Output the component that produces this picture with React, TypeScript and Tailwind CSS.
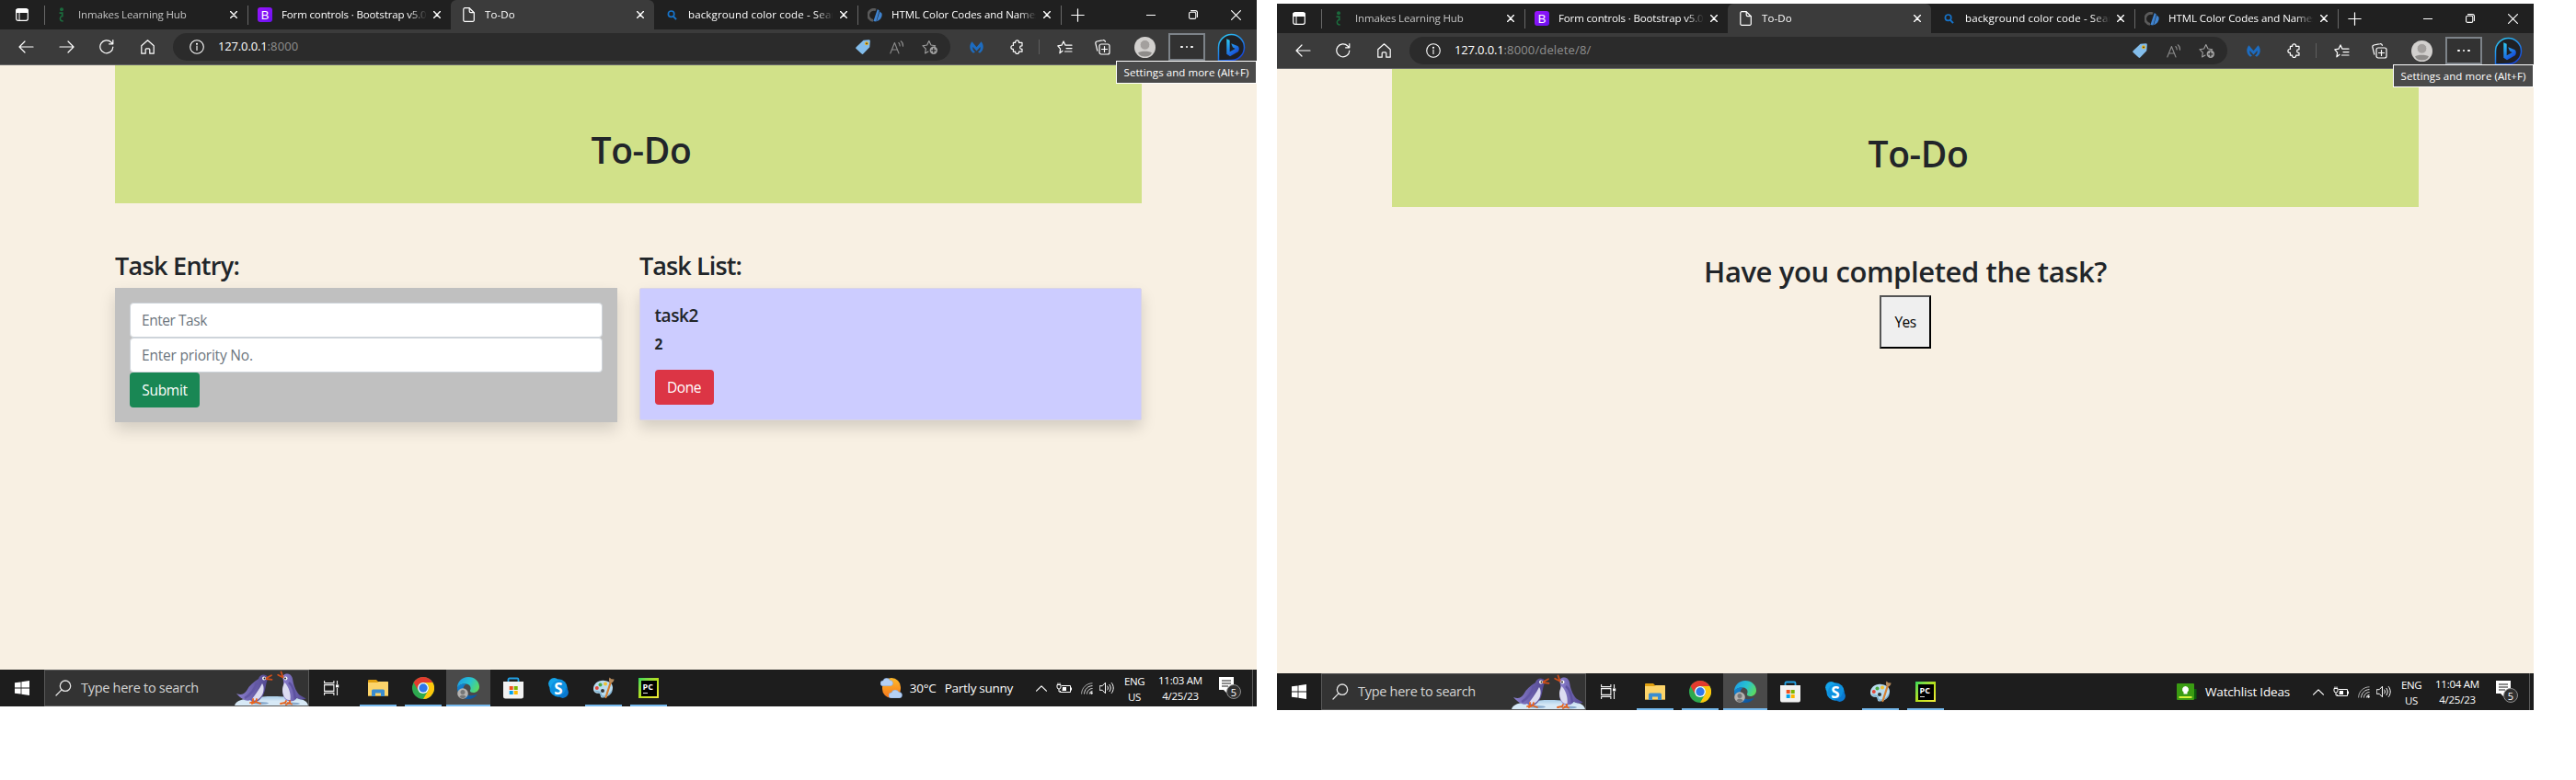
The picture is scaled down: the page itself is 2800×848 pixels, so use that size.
import type { ReactNode } from "react";

const stroke = (w = 1.2) => ({ fill: "none", stroke: "currentColor", strokeWidth: w, strokeLinecap: "round" as const, strokeLinejoin: "round" as const });

/* ---------- Browser chrome icons ---------- */

const Close = () => (
  <svg className="h-2 w-2 shrink-0" viewBox="0 0 8 8" {...stroke(1.4)}><path d="M.6.6l6.8 6.8M7.4.6L.6 7.4" /></svg>
);

const WorkspaceIcon = () => (
  <svg className="h-[14px] w-[14px]" viewBox="0 0 14 14" {...stroke(1.2)}>
    <rect x=".7" y=".7" width="12.6" height="12.6" rx="2" />
    <path d="M1 1.5h12v2.8H1z" fill="currentColor" />
    <path d="M4 4.5v8.5" strokeWidth="1" />
  </svg>
);

const InmakesIcon = () => (
  <svg className="h-4 w-2" viewBox="0 0 8 16" fill="none" stroke="#1b6b3d" strokeWidth="1.8">
    <circle cx="4" cy="2.2" r="2" fill="#1b6b3d" stroke="none" />
    <path d="M1.5 6.2h3.2v3" />
    <path d="M5.6 9.6c-2.6 0-3.4 1.2-3.2 3 .1 1.5 1 2.3 3.3 2.3" strokeWidth="1.5" />
  </svg>
);

const BootstrapIcon = () => (
  <span className="flex h-4 w-4 items-center justify-center rounded-[3px] bg-gradient-to-br from-[#9a12fb] to-[#6a10f0] font-['Liberation_Sans',sans-serif] text-[13px] leading-none text-white">B</span>
);

const FileIcon = () => (
  <svg className="h-4 w-[13px]" viewBox="0 0 13 16" {...stroke(1.2)}>
    <path d="M2.2.7h5L12.3 5.7v8.2a1.4 1.4 0 0 1-1.4 1.4H2.2A1.4 1.4 0 0 1 .8 13.9V2.1A1.4 1.4 0 0 1 2.2.7z" />
    <path d="M7.2 1v3.3a1.4 1.4 0 0 0 1.4 1.4H12" />
  </svg>
);

const BlueSearch = () => (
  <svg className="h-[11px] w-[11px]" viewBox="0 0 11 11" fill="none" stroke="#1673c9" strokeWidth="1.7"><circle cx="4.6" cy="4.2" r="3.2" /><path d="M7 6.8l3 3.4" strokeWidth="2" /></svg>
);

const HtmlColorIcon = () => (
  <svg className="h-[15px] w-[16px]" viewBox="0 0 16 15">
    <path d="M9 1.8A6 6 0 1 0 6 13.3" fill="none" stroke="#5a5a5a" strokeWidth="2.8" />
    <path d="M10.8 1L6.4 14l3 .4L12.8 2.500zM13.200 3.500l-3.200 10.500c4-1 6.300-5 5.500-8.500z" fill="#3f83cf" />
  </svg>
);

const NavBack = () => (
  <svg className="h-[14px] w-[17px]" viewBox="0 0 17 14" {...stroke(1.2)}><path d="M16 7H1M7 1L1 7l6 6" /></svg>
);
const NavForward = () => (
  <svg className="h-[14px] w-[17px]" viewBox="0 0 17 14" {...stroke(1.2)}><path d="M1 7h15M10 1l6 6-6 6" /></svg>
);
const Reload = () => (
  <svg className="h-4 w-4" viewBox="0 0 16 16" {...stroke(1.2)}><path d="M14.8 8.2A7 7 0 1 1 12.9 3L14.5 4.5M14.800.6v4.200h-4.200" /></svg>
);
const HomeIcon = () => (
  <svg className="h-4 w-[15px]" viewBox="0 0 15 16" {...stroke(1.2)}><path d="M.8 6.7L7.5.8l6.7 5.9v8.500H9.800v-4.400a1 1 0 0 0-1-1H6.200a1 1 0 0 0-1 1v4.400H.8z" /></svg>
);
const InfoIcon = () => (
  <svg className="h-4 w-4" viewBox="0 0 16 16" {...stroke(1.1)}><circle cx="8" cy="8" r="7.3" /><path d="M8 7v4.5" /><circle cx="8" cy="4.7" r=".5" fill="currentColor" /></svg>
);
const TagIcon = () => (
  <svg className="h-4 w-4" viewBox="0 0 16 16">
    <path d="M8.500.8l5.800-.6a1.400 1.400 0 0 1 1.500 1.500l-.5 6.600-7 7.200a1.200 1.200 0 0 1-1.700 0L.6 10a1.200 1.200 0 0 1 0-1.700z" fill="#83bdeb" />
    <circle cx="12" cy="4.3" r="2" fill="#f2b413" /><circle cx="12" cy="4.3" r=".9" fill="#333" />
  </svg>
);
const ReadAloud = () => (
  <svg className="h-[15px] w-4 text-[#8c8c8c]" viewBox="0 0 16 15" {...stroke(1.1)}><path d="M.8 14L5.4 2.5 10 14M2.3 10h6.2M9.8 2.5c1 .9 1.4 2 1.3 3.4M12.200.8c1.700 1.300 2.500 3.300 2.300 5.500" /></svg>
);
const StarAdd = () => (
  <svg className="h-[17px] w-[18px] text-[#a0a0a0]" viewBox="0 0 18 17" {...stroke(1.1)}>
    <path d="M7 13L3.6 15l.7-4.8L.9 6.7l4.7-.7L7.8 1.5 10 6l4.7.7-1 1" />
    <circle cx="12.8" cy="11.8" r="4.2" fill="#a0a0a0" stroke="none" />
    <path d="M12.8 9.600V14M10.600 11.800H15" stroke="#2b2b2b" strokeWidth="1.2" />
  </svg>
);
const MalwareIcon = () => (
  <svg className="h-[13px] w-[15px]" viewBox="0 0 15 13" fill="#1d6cc0"><path d="M2.500.3L7.500 6.200 12.500.3C15.800 4.200 15.600 9.600 11 12.800L9 11.600C11.200 10 12 8 11.600 6L7.500 10.400 3.400 6C3 8 3.800 10 6 11.600L4 12.800C-.6 9.600-.8 4.200 2.500.3z" /></svg>
);
const PuzzleIcon = () => (
  <svg className="h-4 w-[15px]" viewBox="0 0 15 16" {...stroke(1.2)}><path d="M3.400 3.400h2.200v-.6a2 2 0 0 1 4 0v.6h3.400v3.400h-.6a1.800 1.800 0 0 0 0 3.600h.6v2.800H9.600v.4a2 2 0 0 1-4 0v-.4H3.400v-2.900h-.6a1.900 1.900 0 0 1 0-3.800h.6z" /></svg>
);
const FavoritesIcon = () => (
  <svg className="h-[15px] w-[17px]" viewBox="0 0 17 15" {...stroke(1.2)}><path d="M6 11.300L2.900 13.800l.7-4.700L.8 5.900l4.200-.7L7 .9l2 4.300h7M10 8.600h6M8.500 12h7.500" /></svg>
);
const CollectionsIcon = () => (
  <svg className="h-[17px] w-[17px]" viewBox="0 0 17 17" {...stroke(1.2)}>
    <rect x="5" y="5" width="11" height="11" rx="2" /><path d="M10.500 7.500v6M7.500 10.500h6M2.800 12.200L.9 4.400A2 2 0 0 1 2.300 2l6.700-1.300a2 2 0 0 1 2.400 1.600" />
  </svg>
);
const Avatar = () => (
  <svg className="h-[23px] w-[23px]" viewBox="0 0 23 23"><circle cx="11.5" cy="11.5" r="11.5" fill="#d2d0ce" /><path d="M4 17.500c2-2.200 13-2.200 15 0-1.500 3-4.500 4-7.500 4s-6-1-7.500-4z" fill="#8e8c8a" /><circle cx="11.5" cy="8.8" r="5.4" fill="#a3a09e" stroke="#d2d0ce" /></svg>
);
const BingIcon = () => (
  <svg className="h-[31px] w-[31px]" viewBox="0 0 31 31">
    <defs>
      <linearGradient id="bing" x1="0" y1="0" x2=".6" y2="1"><stop offset="0" stopColor="#2fd0f4" /><stop offset="1" stopColor="#1546d8" /></linearGradient>
    </defs>
    <path d="M1.500 30V15.500a14 14 0 1 1 14 14z" fill="#1f2024" stroke="url(#bing)" strokeWidth="1.5" />
    <path d="M10.300 6.300l3.400 1.500v12.400l6-3.300-2.700-1.400-1.800-4.200 7 2.600c2 1 2.200 5 .2 6.600l-8.400 4.800-3.700-2.500z" fill="url(#bing)" />
  </svg>
);

/* ---------- Taskbar icons ---------- */

const WindowsLogo = () => (
  <svg className="h-4 w-4" viewBox="0 0 16 16" fill="#fff"><path d="M0 2.300l6.600-.9v6.200H0zM7.400 1.300L16 0v7.600H7.400zM0 8.400h6.600v6.200L0 13.700zM7.400 8.400H16V16l-8.600-1.300z" /></svg>
);
const Magnifier = () => (
  <svg className="h-[18px] w-[18px] text-[#e4e4e4]" viewBox="0 0 18 18" {...stroke(1.3)}><circle cx="11" cy="6.7" r="5.7" /><path d="M7 10.900L1 17" /></svg>
);
const Penguins = () => (
  <svg className="h-[40px] w-[80px] shrink-0" viewBox="0 0 80 40">
    <defs>
      <linearGradient id="ice" x1="0" x2="0" y1="0" y2="1"><stop offset="0" stopColor="#a9cde8" /><stop offset=".5" stopColor="#d7e9f6" /></linearGradient>
      <linearGradient id="feather" x1="0" x2="1" y1="0" y2="0"><stop offset="0" stopColor="#8c80cf" /><stop offset="1" stopColor="#51478f" /></linearGradient>
    </defs>
    <path d="M0 40c0-6 8-8 20-9.500C34 28 60 28.500 72 32c5 1.500 8 4 8 8z" fill="url(#ice)" />
    <ellipse cx="28" cy="36.5" rx="9" ry="1.5" fill="#87a9cc" /><ellipse cx="62" cy="37" rx="9" ry="1.5" fill="#87a9cc" />
    <path d="M2 26c5 2 8 1 11-3 3-6 8-10 13-13 1-4 5-5.500 8-4 2 1 2.500 3 1.500 5.500C33 18 34 27 27 33c-3 3-8 3-10 0-3 2-9 0-15-7z" fill="url(#feather)" />
    <path d="M30 15c3 4 2 13-4 17-3 2-6 2-7 0 3-4 8-11 11-17z" fill="#dcdcf0" />
    <path d="M11 31c6-3 12-11 13-17" fill="none" stroke="#6257a5" strokeWidth="2.5" />
    <path d="M34 9.500l6-3.300M34 10l6.500.8" stroke="#cf4f1b" strokeWidth="1.8" strokeLinecap="round" />
    <circle cx="32" cy="9.5" r="2" fill="#fff" /><circle cx="32.5" cy="9.5" r="1" fill="#222" />
    <path d="M20 32v3l-3 1M24 32l-1 3 5 2M23 35l-4 2" stroke="#e8641d" strokeWidth="1.8" fill="none" strokeLinecap="round" />
    <path d="M52 9c0-3 3-5 6-4.500 4 1 5 4 5.500 8 1 6 4 12 7 15l7 4c-3 2-8 1-10-1-1 3-4 4-8 4-6-1-8-8-7-14 .5-4 1.500-8-.5-11.500z" fill="url(#feather)" />
    <path d="M54.500 14c4 4 7 12 6 19-5 1-8.500-5-8.500-11 0-3 1-5 2.500-8z" fill="#dcdcf0" />
    <path d="M59 14c5 4 6 10 7 18" fill="none" stroke="#5d52a0" strokeWidth="2.5" />
    <path d="M52.500 8.500l-5.300-2.800M52.500 8l-2-5.500" stroke="#cf4f1b" strokeWidth="1.8" strokeLinecap="round" />
    <circle cx="55.5" cy="9.5" r="2" fill="#fff" /><circle cx="55" cy="9.5" r="1" fill="#222" />
    <path d="M56 34l-1 2-5 1M60 34v2l-4 2M58 36l4 1.500" stroke="#e8641d" strokeWidth="1.8" fill="none" strokeLinecap="round" />
  </svg>
);
const TaskView = () => (
  <svg className="h-4 w-[17px]" viewBox="0 0 17 16" fill="none" stroke="#f4f4f4" strokeWidth="1.1"><path d="M.6 0v2.600h10.300V0M.6 16v-2.600h10.300V16M.6 4.600h10.300v6.800H.6zM14.500 0v4M14.500 8v8" /><path d="M13 4.400h3.200v3H13z" fill="#fff" stroke="none" /></svg>
);
const Explorer = () => (
  <svg className="h-[18px] w-[22px]" viewBox="0 0 22 18"><path d="M0 1a1 1 0 0 1 1-1h8l2 2h10a1 1 0 0 1 1 1v14.500H0z" fill="#e0a010" /><path d="M0 3h10l2-1h9a1 1 0 0 1 1 1v14.500H0z" fill="#fcd46a" /><path d="M4 18v-6a1.500 1.500 0 0 1 1.500-1.500h11A1.500 1.500 0 0 1 18 12v6h-4v-3.500H8V18z" fill="#3b8dd0" /></svg>
);
const Chrome = () => (
  <svg className="h-6 w-6" viewBox="0 0 24 24"><circle cx="12" cy="12" r="12" fill="#2da94f" /><path d="M1.600 6A12 12 0 0 1 22.400 6H12a6 6 0 0 0-5.200 9z" fill="#e33b2e" /><path d="M22.400 6A12 12 0 0 1 12 24l5.200-9A6 6 0 0 0 12 6z" fill="#fdc70c" /><circle cx="12" cy="12" r="6" fill="#fff" /><circle cx="12" cy="12" r="4.7" fill="#2f77ea" /></svg>
);
const Edge = () => (
  <svg className="h-6 w-6" viewBox="0 0 24 24">
    <defs>
      <linearGradient id="edgeTop" x1="0" x2="1" y1=".3" y2=".7"><stop offset="0" stopColor="#1c9fe6" /><stop offset=".5" stopColor="#28c3cf" /><stop offset="1" stopColor="#5fdc5a" /></linearGradient>
      <linearGradient id="edgeLow" x1="0" x2="1" y1="0" y2="1"><stop offset="0" stopColor="#1489d6" /><stop offset="1" stopColor="#0d4c94" /></linearGradient>
    </defs>
    <path d="M0 12C0 5 5 0 12 0s12 5 12 10.500c0 4-3 6.500-6.500 6.500-2.500 0-4-1-3.500-2.500 1.500-3 0-6.500-4-7C5 7 1 9 0 12z" fill="url(#edgeTop)" />
    <path d="M0 12c1-3.500 5-5 10-4.500-3.500 2-4.500 6-2 9.500 3 4 9 4 14 1.500C20 22 16.500 24 12 24 5 24 0 18.500 0 12z" fill="url(#edgeLow)" />
    <circle cx="6" cy="18" r="5.8" fill="#b5b3b1" /><circle cx="6" cy="16.5" r="2.5" fill="#777" /><path d="M2.500 21.500c1-2.500 6-2.500 7 0-2 2-5 2-7 0z" fill="#777" />
  </svg>
);
const Store = () => (
  <svg className="h-6 w-6" viewBox="0 0 24 24"><path d="M6.500 6V2.800A1.300 1.300 0 0 1 7.800 1.500h8.400a1.300 1.300 0 0 1 1.300 1.300V6" fill="none" stroke="#22a2e6" strokeWidth="1.8" /><path d="M1 5h22v16a2.500 2.500 0 0 1-2.500 2.500h-17A2.500 2.500 0 0 1 1 21z" fill="#f2f2f2" /><path d="M7.700 10h4v4h-4z" fill="#f0501e" /><path d="M12.700 10h4v4h-4z" fill="#7cb700" /><path d="M7.700 15h4v4h-4z" fill="#00a2ed" /><path d="M12.700 15h4v4h-4z" fill="#fdb800" /></svg>
);
const Skype = () => (
  <span className="relative flex h-[22px] w-[22px] items-center justify-center">
    <svg className="absolute inset-0 h-full w-full" viewBox="0 0 22 22"><circle cx="11" cy="11" r="9.7" fill="#0d93e2" /><circle cx="6.3" cy="6.3" r="6.2" fill="#14a4ea" /><circle cx="15.7" cy="15.7" r="6.2" fill="#0a79d1" /><circle cx="11" cy="11" r="8" fill="#0e90df" /></svg>
    <span className="relative text-[17px] leading-none font-bold text-white">S</span>
  </span>
);
const Paint = () => (
  <svg className="h-6 w-6" viewBox="0 0 24 24"><path d="M1 13C1 7 7 3 13 4c5 .5 9 3 9 7.500 0 6-5 11-11 11-2.500 0-2-2-2.500-3.500-.6-2-2.500-1-4.500-1.500S1 15 1 13z" fill="#b9dcef" /><path d="M3 15c2 2 5 0 6 3 .5 2 .5 3.500 3 3.300 4-.3 7.500-2.500 9-6" fill="none" stroke="#7fb2d2" strokeWidth="1.5" /><circle cx="4.8" cy="12" r="2" fill="#e2473a" /><circle cx="8.5" cy="8.5" r="2" fill="#49a942" /><circle cx="14" cy="7.5" r="2" fill="#f1c232" /><circle cx="11" cy="15" r="2" fill="#333" /><path d="M14.500 22L20 5" stroke="#d68032" strokeWidth="2.2" strokeLinecap="round" /><path d="M18.500 5.500c-1-2-.5-3.500 0-5l2 1.800 3 .2c0 2-1.500 3.500-2.800 4z" fill="#b58a5c" /></svg>
);
const PyCharm = () => (
  <span className="flex h-[22px] w-[22px] bg-gradient-to-br from-[#21d757] via-[#b5e01a] to-[#f4ec3a] p-[2.5px]">
    <span className="flex flex-1 flex-col items-start bg-black pt-[2px] pl-[2px]">
      <span className="text-[9px] leading-[9px] font-bold text-white">PC</span>
      <span className="mt-[2px] h-[1.5px] w-[5px] bg-[#ddd]" />
    </span>
  </span>
);
const Cloud = ({ c }: { c: string }) => (
  <svg className={c} viewBox="0 0 15 9"><path d="M3 9a3 3 0 0 1 0-6 4.300 4.300 0 0 1 8-.5A3.300 3.300 0 0 1 12 9z" fill="#b4d0f5" stroke="#7ea4de" strokeWidth=".5" /></svg>
);
const Weather = () => (
  <span className="relative h-[22px] w-6">
    <span className="absolute top-0 left-[2px] h-[22px] w-[20px] rounded-full bg-gradient-to-b from-[#fdb92c] to-[#f4741a]" />
    <Cloud c="absolute top-0 left-0 h-[9px] w-[14px]" />
    <Cloud c="absolute bottom-0 left-[9px] h-[9px] w-[15px]" />
  </span>
);
const Watchlist = () => (
  <svg className="h-[19px] w-[22px]" viewBox="0 0 22 19"><path d="M15 6h6.500v11H15z" fill="#0c5c0c" /><rect width="19" height="18" rx="1" fill="#3a9c12" /><path d="M9.500 3a3.600 3.600 0 0 1 2 6.500v2h-4v-2a3.600 3.600 0 0 1 2-6.500z" fill="#fff" /><path d="M2.500 14h14v2h-14z" fill="#d7f23a" /></svg>
);
const Chevron = () => (
  <svg className="h-[7px] w-3" viewBox="0 0 12 7" {...stroke(1.2)}><path d="M.6 6.200L6 .8l5.400 5.400" /></svg>
);
const Battery = () => (
  <svg className="h-[13px] w-[17px]" viewBox="0 0 17 13" fill="none" stroke="#fff"><path d="M6 3.500h9.500v7H4.500V9" /><path d="M7 5h4v4H6.500z" fill="#fff" stroke="none" /><path d="M16.500 5.500v3M1 2.500h4v2.500a2 2 0 0 1-4 0zM2 2.500V.5M4 2.500V.5M3 7v3h1.500" /></svg>
);
const Wifi = () => (
  <svg className="h-[13px] w-[13px]" viewBox="0 0 13 13" fill="none" stroke="#e0e0e0"><path d="M.6 12.500C.6 6 6 .8 12.500.8" stroke="#aaa" /><path d="M3.600 12.500c0-4.900 4-8.900 8.900-8.900M6.500 12.500c0-3.300 2.700-6 6-6M9.300 12.500c0-1.800 1.400-3.200 3.200-3.200" /><circle cx="11.5" cy="11.5" r="1.2" fill="#fff" stroke="none" /></svg>
);
const Sound = () => (
  <svg className="h-[14px] w-[17px]" viewBox="0 0 17 14" {...stroke(1)}><path d="M.6 4.700h2.600L6.500 1.200v11.600L3.200 9.300H.6zM8.800 5c.8 1.200.8 2.800 0 4M11 3.300c1.700 2.200 1.700 5.200 0 7.400M13.300 1.500c2.600 3.200 2.600 7.800 0 11" /></svg>
);

/* ---------- Browser window ---------- */

type TabInfo = { title: string; cls: string; icon: ReactNode; active?: boolean; sep?: boolean };
const TABS: TabInfo[] = [
  { title: "Inmakes Learning Hub", cls: "tracking-[-0.15px] text-[#c4c4c4]", icon: <InmakesIcon />, sep: true },
  { title: "Form controls · Bootstrap v5.0", cls: "tracking-[-0.14px]", icon: <BootstrapIcon />, sep: true },
  { title: "To-Do", cls: "tracking-[0.1px]", icon: <FileIcon />, active: true },
  { title: "background color code - Search", cls: "tracking-[0.14px]", icon: <BlueSearch /> },
  { title: "HTML Color Codes and Names", cls: "tracking-[-0.06px]", icon: <HtmlColorIcon />, sep: true },
];

function Tab({ tab }: { tab: TabInfo }) {
  return (
    <div className={`flex h-8 w-[221px] shrink-0 items-center ${tab.active ? "rounded-t-md bg-[#3b3b3b]" : ""}`}>
      <span className={`h-[21px] w-px ${tab.sep ? "bg-[#686868]" : ""}`} />
      <span className="flex w-[36px] items-center justify-center">{tab.icon}</span>
      <span className={`w-[157px] overflow-hidden text-[11.5px] whitespace-nowrap [mask-image:linear-gradient(to_right,black_138px,transparent_158px)] ${tab.cls}`}>{tab.title}</span>
      <span className="flex w-[24px] justify-center"><Close /></span>
    </div>
  );
}

const Cell = ({ w = "w-11", children }: { w?: string; children: ReactNode }) => (
  <span className={`flex h-full shrink-0 items-center justify-center ${w}`}>{children}</span>
);

function BrowserHeader({ path, forward }: { path: string; forward?: boolean }) {
  return (
    <header className="text-white">
      <div className="flex h-8 items-center bg-[#202020]">
        <Cell w="w-[48px]"><WorkspaceIcon /></Cell>
        {TABS.map((t) => <Tab key={t.title} tab={t} />)}
        <span className="h-[21px] w-px bg-[#686868]" />
        <Cell w="w-[34px]"><svg className="h-[15px] w-[15px]" viewBox="0 0 15 15" {...stroke(1.2)}><path d="M7.500.8v13.400M.8 7.500h13.400" /></svg></Cell>
        <span className="flex-1" />
        <Cell w="w-[46px]"><span className="h-px w-[10px] bg-white" /></Cell>
        <Cell w="w-[46px]"><svg className="h-[10px] w-[10px]" viewBox="0 0 10 10" {...stroke(1.1)}><rect x=".6" y="2.2" width="7.2" height="7.2" rx="1.5" /><path d="M2.500.6h4.800a2.200 2.200 0 0 1 2.200 2.200v4.600" /></svg></Cell>
        <Cell w="w-[46px]"><svg className="h-[11px] w-[11px]" viewBox="0 0 11 11" {...stroke(1.2)}><path d="M.6.6l9.800 9.800M10.400.6L.6 10.400" /></svg></Cell>
      </div>
      <div className="relative flex h-[39px] items-center border-b border-[#6a6a6a] bg-[#3b3b3b] pl-1.5">
        <Cell><NavBack /></Cell>
        {forward && <Cell><NavForward /></Cell>}
        <Cell><Reload /></Cell>
        <Cell><HomeIcon /></Cell>
        <div className="ml-1.5 flex h-[30px] flex-1 items-center rounded-full bg-[#2b2b2b] pr-1 pl-[18px]">
          <InfoIcon />
          <p className="ml-[15px] flex-1 text-[13px]"><span className="tracking-[-0.15px]">127.0.0.1</span><span className="tracking-[0.15px] text-[#8f8f8f]">{path}</span></p>
          <Cell w="w-[36px]"><TagIcon /></Cell>
          <Cell w="w-[37px]"><ReadAloud /></Cell>
          <Cell w="w-[36px]"><StarAdd /></Cell>
        </div>
        <span className="w-1.5" />
        <Cell><MalwareIcon /></Cell>
        <Cell><PuzzleIcon /></Cell>
        <span className="mx-[2px] h-4 w-px bg-[#5e5e5e]" />
        <span className="w-[3px]" />
        <Cell><FavoritesIcon /></Cell>
        <Cell w="w-[39px]"><CollectionsIcon /></Cell>
        <Cell w="w-[50px] pl-[3px]"><Avatar /></Cell>
        <span className="mx-[2px] flex h-[30px] w-[40px] items-center justify-center gap-[3px] border-2 border-[#7d8389] bg-[#323232]">
          <i className="h-[2.5px] w-[2.5px] rounded-full bg-white" /><i className="h-[2.5px] w-[2.5px] rounded-full bg-white" /><i className="h-[2.5px] w-[2.5px] rounded-full bg-white" />
        </span>
        <Cell w="w-[54px] pr-[2px]"><BingIcon /></Cell>
        <span className="absolute top-[34px] right-0 z-10 flex h-[25px] w-[153px] items-center justify-center border border-white bg-[#4a4a4a] text-[11.5px] tracking-[0.06px] whitespace-nowrap">Settings and more (Alt+F)</span>
      </div>
    </header>
  );
}

/* ---------- Taskbar ---------- */

function AppButton({ open, active, children }: { open?: boolean; active?: boolean; children: ReactNode }) {
  return (
    <span className={`mr-px flex h-10 w-12 flex-col items-center ${active ? "bg-[#4a4a4a]" : ""}`}>
      <span className="flex h-[38px] items-center pt-[2px]">{children}</span>
      <span className={`h-[2px] ${active ? "w-12 bg-[#76b9ed]" : open ? "w-10 bg-[#76b9ed]" : ""}`} />
    </span>
  );
}

function Taskbar({ time, widget }: { time: string; widget: ReactNode }) {
  return (
    <footer className="flex h-10 items-center bg-[#1d1d1d] text-white">
      <Cell w="w-12"><WindowsLogo /></Cell>
      <div className="flex h-10 w-[288px] items-center overflow-hidden border border-[#585858] bg-[#333] pl-[11px]">
        <Magnifier />
        <span className="ml-[10px] flex-1 text-[14.5px] tracking-[-0.29px] whitespace-nowrap text-[#d4d4d4]">Type here to search</span>
        <Penguins />
      </div>
      <Cell w="w-[51px] pr-[2px]"><TaskView /></Cell>
      <AppButton open><Explorer /></AppButton>
      <AppButton open><Chrome /></AppButton>
      <AppButton open active><Edge /></AppButton>
      <AppButton><Store /></AppButton>
      <AppButton><Skype /></AppButton>
      <AppButton open><Paint /></AppButton>
      <AppButton open><PyCharm /></AppButton>
      <div className="flex flex-1 items-center justify-end pr-[23px] text-[13.5px] whitespace-nowrap">{widget}</div>
      <Cell w="w-[16px]"><Chevron /></Cell>
      <Cell w="w-[32px]"><Battery /></Cell>
      <Cell w="w-[19px]"><Wifi /></Cell>
      <Cell w="w-[25px]"><Sound /></Cell>
      <div className="mr-[3px] w-[34px] pt-px text-center text-[11.5px] leading-[17px] tracking-[-0.4px]"><p>ENG</p><p>US</p></div>
      <div className="w-[60px] text-center text-[11.5px] leading-[17px] tracking-[-0.25px]"><p>{time}</p><p>4/25/23</p></div>
      <span className="relative ml-[12px] h-6 w-[26px]">
        <svg className="absolute top-0 left-0 h-[17px] w-4" viewBox="0 0 16 17"><path d="M0 0h16v14h-5l-3 3-3-3H0z" fill="#fff" /><path d="M3 4h10M3 7h10M3 10h7" stroke="#1d1d1d" /></svg>
        <span className="absolute top-[8px] left-[8px] flex h-4 w-4 items-center justify-center rounded-full border border-[#8d8d8d] bg-[#303030] text-[11px] leading-none">5</span>
      </span>
      <span className="ml-[10px] h-10 w-px bg-[#5c5c5c]" />
      <span className="w-[4px]" />
    </footer>
  );
}

/* ---------- Pages ---------- */

function BrowserWindow({ path, forward, time, widget, children }: { path: string; forward?: boolean; time: string; widget: ReactNode; children: ReactNode }) {
  return (
    <section className="flex h-[768px] w-[1366px] shrink-0 flex-col">
      <BrowserHeader path={path} forward={forward} />
      <main className="flex-1 bg-[#f8f0e3] px-[125px] text-[#212529]">
        <div className="h-[150px] bg-[#d1e189] pt-[68px] pl-[28px] text-center">
          <h1 className="text-[39px] leading-[48px] font-semibold tracking-[-0.35px]">To-Do</h1>
        </div>
        {children}
      </main>
      <Taskbar time={time} widget={widget} />
    </section>
  );
}

const field = "block h-[38px] w-full rounded-[4px] border border-[#ced4da] bg-white px-3 text-[15.5px] placeholder:text-[#6c757d]";

function TaskPage() {
  return (
    <div className="grid grid-cols-[546px_545.5px] items-start gap-x-[24px] pt-[51px]">
      <section>
        <h3 className="mb-[7px] text-[27px] leading-[34px] font-semibold tracking-[-0.7px]">Task Entry:</h3>
        <form className="bg-[#c0c0c0] p-4 shadow-[0_8px_16px_rgba(0,0,0,0.15)]">
          <input className={`${field} tracking-[-0.45px]`} placeholder="Enter Task" />
          <input className={`${field} tracking-[-0.2px]`} placeholder="Enter priority No." />
          <button type="button" className="block h-[38px] w-[76px] rounded-[4px] bg-[#198754] pt-px text-[15.5px] tracking-[-0.3px] text-white">Submit</button>
        </form>
      </section>
      <section>
        <h3 className="mb-[7px] text-[27px] leading-[34px] font-semibold tracking-[-0.9px]">Task List:</h3>
        <div className="rounded-[2px] border border-[#d9d4e6] bg-[#ccccff] px-[15.5px] py-4 shadow-[0_8px_16px_rgba(0,0,0,0.15)]">
          <h5 className="mb-[7px] pt-px text-[19px] leading-[24px] font-semibold tracking-[-0.4px]">task2</h5>
          <p className="mb-4 text-[15.5px] leading-[24px] font-bold">2</p>
          <button type="button" className="block h-[38px] w-[64px] rounded-[4px] bg-[#dc3545] pt-px text-[15.5px] tracking-[-0.5px] text-white">Done</button>
        </div>
      </section>
    </div>
  );
}

function DeletePage() {
  return (
    <div className="flex flex-col items-center pt-[51px]">
      <h2 className="mb-[7px] text-[31px] leading-[38px] font-semibold tracking-[-0.4px]">Have you completed the task?</h2>
      <button type="button" className="h-[58px] w-[56px] border-2 border-t-[#555] border-r-black border-b-black border-l-[#555] bg-[#efefef] pt-px text-[15.5px] tracking-[-0.6px] text-black">Yes</button>
    </div>
  );
}

export default function App() {
  return (
    <div className="flex h-[848px] w-[2800px] items-start gap-[22px] overflow-hidden bg-white font-['Open_Sans','Noto_Sans',sans-serif]">
      <BrowserWindow
        path=":8000"
        forward
        time="11:03 AM"
        widget={<><Weather /><span className="ml-[8px] w-[38px] tracking-[-0.2px]">30°C</span><span className="tracking-[-0.28px]">Partly sunny</span></>}
      >
        <TaskPage />
      </BrowserWindow>
      <div className="pt-1">
        <BrowserWindow
          path=":8000/delete/8/"
          time="11:04 AM"
          widget={<><Watchlist /><span className="ml-[9px] tracking-[-0.18px]">Watchlist Ideas</span></>}
        >
          <DeletePage />
        </BrowserWindow>
      </div>
    </div>
  );
}
